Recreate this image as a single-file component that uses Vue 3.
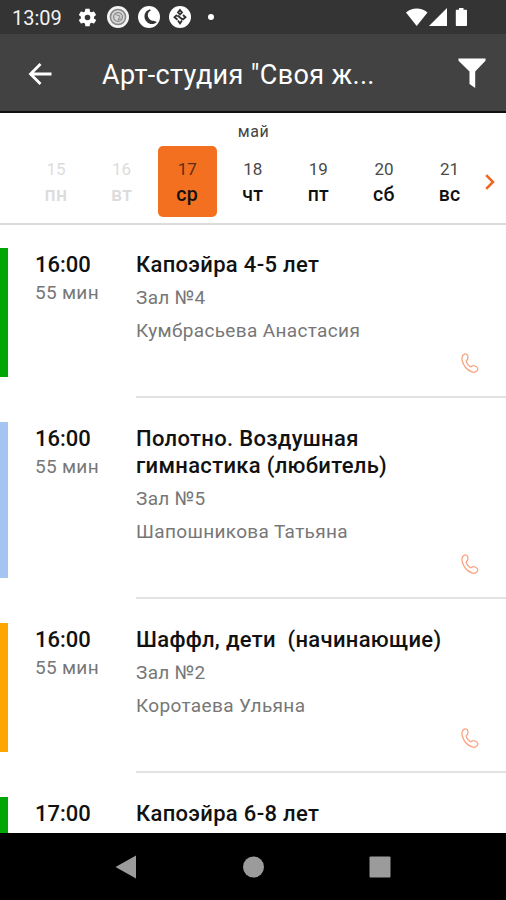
<template>
  <div class="screen">
    <div class="status-bar">
      <span class="clock">13:09</span>
      <svg class="gear" viewBox="0 0 24 24">
        <path
          fill="#fff"
          fill-rule="evenodd"
          d="M19.4 13c0-.3.1-.6.1-1s0-.7-.1-1l2.1-1.6c.2-.2.3-.4.1-.7l-2-3.4c-.1-.2-.4-.3-.6-.2l-2.5 1c-.5-.4-1.1-.7-1.7-1L14.5 2.4c0-.2-.2-.4-.5-.4h-4c-.3 0-.5.2-.5.4l-.4 2.7c-.6.2-1.2.6-1.7 1l-2.5-1c-.2-.1-.5 0-.6.2l-2 3.4c-.1.2-.1.5.1.7L4.5 11c0 .3-.1.6-.1 1s0 .7.1 1l-2.1 1.6c-.2.2-.3.4-.1.7l2 3.4c.1.2.4.3.6.2l2.5-1c.5.4 1.1.7 1.7 1l.4 2.7c0 .2.2.4.5.4h4c.3 0 .5-.2.5-.4l.4-2.7c.6-.2 1.2-.6 1.7-1l2.5 1c.2.1.5 0 .6-.2l2-3.4c.1-.2.1-.5-.1-.7L19.4 13zM12 15.2a3.2 3.2 0 1 1 0-6.4 3.2 3.2 0 0 1 0 6.4z"
        />
      </svg>
      <svg class="notice" viewBox="0 0 22 22">
        <circle cx="11" cy="11" r="11" fill="#f4f4f4" />
        <circle cx="11" cy="11" r="7.6" fill="#d8d8d8" stroke="#888" stroke-width="1.5" />
        <circle cx="11" cy="11" r="4.4" fill="none" stroke="#8a8a8a" stroke-width="1.3" />
        <path d="M8.5 8.5l4.5 1.5-2 4 3-1.5" fill="none" stroke="#8a8a8a" />
      </svg>
      <svg class="notice" viewBox="0 0 22 22">
        <circle cx="11" cy="11" r="11" fill="#fff" />
        <path d="M12 3.2C6 5 5 11.5 8.5 15.5C11.5 18.8 16 19 18.8 16L15.5 14.8C12.500 15 9.800 12 9.800 9C9.900 7 10.500 5.800 12.800 4.500z" fill="#333" />
      </svg>
      <svg class="notice" viewBox="0 0 22 22">
        <circle cx="11" cy="11" r="11" fill="#fff" />
        <path
          d="M11 4l2 2.500-2 2-2-2zM8 9l-2.500 2.200 3 2.500M14 9l2.500 2.200-3 2.500M8.500 9.500l5 4M9 14.500l2 3 2-3"
          fill="none"
          stroke="#303030"
          stroke-width="1.8"
        />
      </svg>
      <span class="more-dot"></span>
      <svg class="signals" viewBox="0 0 66 22">
        <path d="M0 5.5C6 .2 15.5.2 21.5 5.5L10.7 19z" fill="#fff" />
        <path d="M41 1v18H23z" fill="#fff" />
        <path d="M53 1h4.5v1.8H60c.6 0 1 .4 1 1V18c0 .6-.4 1-1 1h-9.2c-.6 0-1-.4-1-1V3.8c0-.6.4-1 1-1H53z" fill="#fff" />
      </svg>
    </div>

    <div class="app-bar">
      <svg class="back" viewBox="0 0 24 24">
        <path d="M23.5 12H2.5M12.5 2l-10 10 10 10" fill="none" stroke="#fff" stroke-width="2.8" />
      </svg>
      <h1 class="title">Арт-студия "Своя ж...</h1>
      <svg class="filter" viewBox="0 0 28 30">
        <path d="M.5.5h27v2.3L17.2 13.500V30L11.500 26V13.500L.5 2.800z" fill="#fff" />
      </svg>
    </div>

    <div class="calendar">
      <div class="month">май</div>
      <div class="week">
        <div
          v-for="d in days"
          :key="d.num"
          class="day"
          :class="{ past: d.num < today, active: d.num === selected }"
          @click="selected = d.num"
        >
          <span class="num">{{ d.num }}</span>
          <span class="name">{{ d.name }}</span>
        </div>
        <svg class="next" viewBox="0 0 10 16">
          <path d="M1.2 1.2L8 8l-6.8 6.8" fill="none" stroke="#f0641e" stroke-width="2.5" />
        </svg>
      </div>
    </div>

    <div class="lessons">
      <div v-for="(l, i) in lessons" :key="i" class="lesson" :class="l.color">
        <div class="when">
          <div class="time">{{ l.time }}</div>
          <div v-if="l.duration" class="duration">{{ l.duration }}</div>
        </div>
        <div class="info">
          <div class="lesson-name">{{ l.name }}</div>
          <div class="detail">{{ l.room }}</div>
          <div class="detail">{{ l.coach }}</div>
          <svg class="phone" viewBox="0 0 18 21">
            <path
              d="M3.3 1.200C5 .4 6.600 1.500 6.900 3.500c.3 2-.1 3-1.400 4.100-.6.6-.3 1.200.2 2 .8 1.500 1.800 2.700 3 3.700.8.6 1.300.6 1.900 0 1.200-1.100 2.600-1 4.400.2 2 1.300 2.300 2.700 1 4.200-1.200 1.500-3 2-5.100 1.200C6 17 2.200 12.300 1.100 7 .600 4.500 1.300 2.200 3.300 1.200z"
              fill="none"
              stroke="#f9a583"
              stroke-width="1.3"
            />
          </svg>
        </div>
      </div>
    </div>

    <div class="nav-bar">
      <svg class="nav-icon" viewBox="0 0 24 24"><path d="M21 .5v23L.5 12z" fill="#9b9b9b" /></svg>
      <svg class="nav-icon" viewBox="0 0 24 24"><circle cx="12.5" cy="12" r="10.5" fill="#9b9b9b" /></svg>
      <svg class="nav-icon" viewBox="0 0 24 24"><rect x="1.5" y="1.5" width="21" height="21" rx="1" fill="#9b9b9b" /></svg>
    </div>
  </div>
</template>

<script setup>
import { ref } from 'vue'

const today = 17
const selected = ref(today)

const days = [
  { num: 15, name: 'пн' },
  { num: 16, name: 'вт' },
  { num: 17, name: 'ср' },
  { num: 18, name: 'чт' },
  { num: 19, name: 'пт' },
  { num: 20, name: 'сб' },
  { num: 21, name: 'вс' },
]

const lessons = [
  { time: '16:00', duration: '55 мин', name: 'Капоэйра 4-5 лет', room: 'Зал №4', coach: 'Кумбрасьева Анастасия', color: 'green' },
  { time: '16:00', duration: '55 мин', name: 'Полотно. Воздушная гимнастика (любитель)', room: 'Зал №5', coach: 'Шапошникова Татьяна', color: 'blue' },
  { time: '16:00', duration: '55 мин', name: 'Шаффл, дети  (начинающие)', room: 'Зал №2', coach: 'Коротаева Ульяна', color: 'orange' },
  { time: '17:00', name: 'Капоэйра 6-8 лет', color: 'green' },
]
</script>

<style>
body {
  background: #fff;
}
</style>

<style scoped>
.screen {
  width: 506px;
  height: 900px;
  display: flex;
  flex-direction: column;
  overflow: hidden;
  background: #fff;
  color: #111;
  font-family: Roboto, 'Noto Sans', sans-serif;
}

.status-bar {
  flex: none;
  height: 34px;
  box-sizing: border-box;
  padding-left: 12px;
  display: flex;
  align-items: center;
  background: #343434;
}

.clock {
  width: 65px;
  color: #f2f2f2;
  font-size: 20px;
  line-height: 34px;
  padding-top: 2px;
  box-sizing: border-box;
}

.gear {
  width: 21px;
  height: 21px;
  margin-right: 9px;
}

.notice {
  width: 22px;
  height: 22px;
  margin-right: 9px;
}

.more-dot {
  width: 6px;
  height: 6px;
  margin-left: 8px;
  border-radius: 50%;
  background: #fff;
}

.signals {
  width: 66px;
  height: 22px;
  margin-left: auto;
  margin-right: 34px;
  padding-top: 2px;
}

.app-bar {
  flex: none;
  height: 79px;
  box-sizing: border-box;
  padding: 0 20px 0 28px;
  display: flex;
  align-items: center;
  background: #424242;
  border-bottom: 2px solid #101010;
}

.back {
  width: 24px;
  height: 24px;
  margin-top: 2px;
}

.title {
  flex: 1;
  margin: 4px 0 0 50px;
  color: #fff;
  font-size: 27px;
  font-weight: 400;
  line-height: 32px;
  letter-spacing: 0.35px;
  white-space: nowrap;
}

.filter {
  width: 28px;
  height: 30px;
}

.calendar {
  flex: none;
  height: 112px;
  box-sizing: border-box;
  border-bottom: 2px solid #dcdcdc;
}

.month {
  height: 33px;
  line-height: 37px;
  padding-left: 1px;
  text-align: center;
  font-size: 16px;
  letter-spacing: 0.6px;
  color: #444;
}

.week {
  display: flex;
  align-items: center;
  padding-left: 26.5px;
}

.day {
  width: 59px;
  height: 71px;
  margin-right: 6.6px;
  box-sizing: border-box;
  padding-top: 12px;
  display: flex;
  flex-direction: column;
  align-items: center;
  border-radius: 5px;
}

.num {
  font-size: 17px;
  line-height: 23px;
  color: #4a4a4a;
}

.name {
  font-size: 19.5px;
  font-weight: 500;
  line-height: 27px;
  letter-spacing: 0.3px;
}

.day.past .num,
.day.past .name {
  color: #dcdcdc;
}

.day.active {
  background: #f37021;
}

.day.active .num {
  color: #5b2f14;
}

.next {
  flex: none;
  width: 10px;
  height: 16px;
  margin-left: -1px;
}

.lessons {
  flex: 1;
  min-height: 0;
  overflow: hidden;
  padding-top: 23px;
}

.lesson {
  display: flex;
  margin-bottom: 24px;
}

/* the colour strip ends above the divider, so it belongs to the time column */
.when {
  width: 136px;
  box-sizing: border-box;
  padding-left: 27px;
  margin-bottom: 21px;
  border-left: 8px solid;
}

.green .when { border-left-color: #00a506; }
.blue .when { border-left-color: #a4c5f1; }
.orange .when { border-left-color: #ffa500; }

.time {
  color: #111;
  font-size: 22px;
  font-weight: 500;
  line-height: 27px;
  padding-top: 3px;
}

.duration {
  color: #777;
  font-size: 19px;
  line-height: 30px;
  letter-spacing: 0.3px;
}

.info {
  flex: 1;
  box-sizing: border-box;
  padding-top: 3px;
  border-bottom: 2px solid #e2e2e2;
}

.lesson-name {
  width: 330px;
  min-height: 27px;
  font-size: 22px;
  font-weight: 500;
  line-height: 27px;
  letter-spacing: 0.32px;
  white-space: pre-wrap;
  margin-bottom: 4px;
}

.blue .lesson-name {
  width: 280px;
}

.detail {
  height: 32.5px;
  color: #777;
  font-size: 19px;
  line-height: 32.5px;
  letter-spacing: 0.35px;
}

.phone {
  display: block;
  width: 18px;
  height: 21px;
  margin: 6px 0 22px 325px;
}

.nav-bar {
  flex: none;
  height: 67px;
  display: flex;
  align-items: center;
  justify-content: center;
  gap: 102.5px;
  background: #000;
}

.nav-icon {
  width: 24px;
  height: 24px;
}
</style>
